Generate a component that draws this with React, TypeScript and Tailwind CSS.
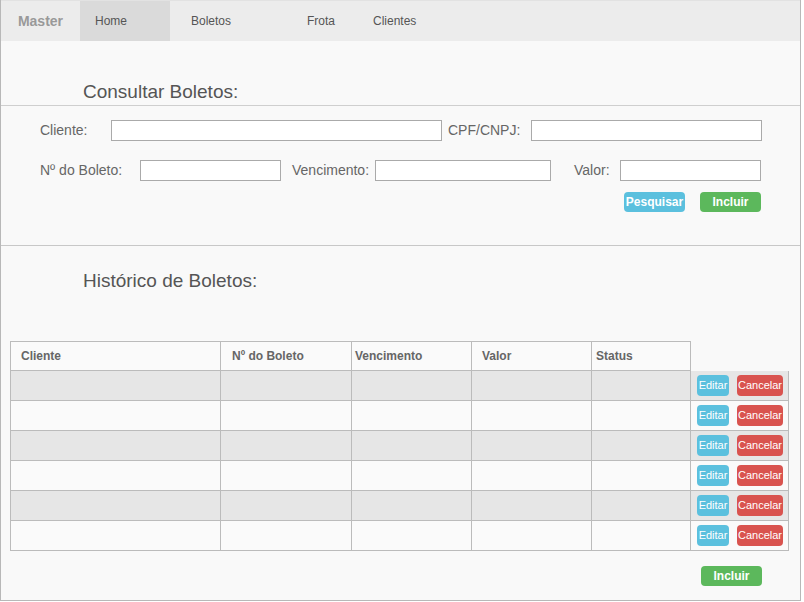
import React from "react";

const font = { fontFamily: '"Liberation Sans", Arial, sans-serif' };

const headers = [
    { label: "Cliente", cls: "w-[210px] pl-[10px]" },
    { label: "Nº do Boleto", cls: "w-[131px] pl-[11px]" },
    { label: "Vencimento", cls: "w-[120px] pl-[3px]" },
    { label: "Valor", cls: "w-[120px] pl-[10px]" },
    { label: "Status", cls: "w-[100px] pl-[4px] border-r" },
];

const bodyCells = ["w-[210px]", "w-[131px]", "w-[120px]", "w-[120px]", "w-[99px]"];

const rows = [0, 1, 2, 3, 4, 5];

function Field({ label, labelCls, inputCls }: { label: string; labelCls: string; inputCls: string }) {
    return (
        <>
            <span className={`${labelCls} text-[14px] text-[#666]`}>{label}</span>
            <div className={`${inputCls} h-[21px] border border-[#aaa] bg-white`} />
        </>
    );
}

export default function App() {
    return (
        <div style={font} className="w-[801px] h-[601px] border border-t-0 border-[#b8b8b8] bg-[#f9f9f9] flex flex-col">

            {/* Navbar */}
            <div className="h-[41px] bg-[#ececec] flex items-center text-[12px] text-[#555] border-t border-[#e2e2e2]">
                <span className="w-[79px] text-center text-[14px] font-bold text-[#999]">Master</span>
                <span className="w-[90px] h-full bg-[#dadada] pl-[15px] flex items-center">Home</span>
                <span className="w-[116px] pl-[21px]">Boletos</span>
                <span className="w-[66px] pl-[21px]">Frota</span>
                <span className="pl-[21px]">Clientes</span>
            </div>

            {/* Consultar */}
            <div className="h-[65px] border-b border-[#cfcfcf] pt-[39px] pl-[82px]">
                <h2 className="text-[19px] leading-[24px] text-[#555]">Consultar Boletos:</h2>
            </div>

            <div className="border-b border-[#c8c8c8] pt-[14px] pb-[33px]">
                <div className="flex items-center">
                    <div className="w-[39px]" />
                    <Field label="Cliente:" labelCls="w-[71px]" inputCls="w-[331px]" />
                    <span className="ml-[6px] w-[83px] text-[14px] text-[#666]">CPF/CNPJ:</span>
                    <div className="w-[231px] h-[21px] border border-[#aaa] bg-white" />
                </div>
                <div className="flex items-center mt-[19px]">
                    <div className="w-[39px]" />
                    <Field label="Nº do Boleto:" labelCls="w-[100px]" inputCls="w-[141px]" />
                    <span className="ml-[11px] w-[83px] text-[14px] text-[#666]">Vencimento:</span>
                    <div className="w-[176px] h-[21px] border border-[#aaa] bg-white" />
                    <span className="ml-[23px] w-[46px] text-[14px] text-[#666]">Valor:</span>
                    <div className="w-[141px] h-[21px] border border-[#aaa] bg-white" />
                </div>
                <div className="flex mt-[11px] pl-[623px] gap-[15px]">
                    <button className="w-[61px] h-[20px] rounded-[4px] bg-[#5bc0de] text-white text-[12px] font-bold">Pesquisar</button>
                    <button className="w-[61px] h-[20px] rounded-[4px] bg-[#5cb85c] text-white text-[12px] font-bold">Incluir</button>
                </div>
            </div>

            {/* Historico */}
            <div className="pt-[23px] pl-[82px]">
                <h2 className="text-[19px] leading-[24px] text-[#555]">Histórico de Boletos:</h2>
            </div>

            <div className="mt-[48px] ml-[9px] w-[779px] text-[12px]">
                <div className="flex h-[30px]">
                    {headers.map((h) => (
                        <div key={h.label} className={`${h.cls} border-l border-t border-b border-[#bbb] flex items-center font-bold text-[#666] bg-[#fafafa]`}>
                            {h.label}
                        </div>
                    ))}
                </div>
                {rows.map((r) => (
                    <div key={r} className={`flex h-[30px] ${r % 2 === 0 ? "bg-[#e6e6e6]" : "bg-[#fafafa]"}`}>
                        {bodyCells.map((c, i) => (
                            <div key={i} className={`${c} border-l border-b border-[#bbb]`} />
                        ))}
                        <div className="w-[99px] border-l border-r border-b border-[#bbb] flex items-center pl-[6px] gap-[8px]">
                            <button className="w-[32px] h-[21px] rounded-[4px] bg-[#5bc0de] text-white text-[11px] leading-none">Editar</button>
                            <button className="w-[46px] h-[21px] rounded-[4px] bg-[#d9534f] text-white text-[11px] leading-none">Cancelar</button>
                        </div>
                    </div>
                ))}
            </div>

            <div className="mt-[12px] pl-[700px]">
                <button className="w-[61px] h-[20px] rounded-[4px] bg-[#5cb85c] text-white text-[12px] font-bold">Incluir</button>
            </div>
        </div>
    );
}
